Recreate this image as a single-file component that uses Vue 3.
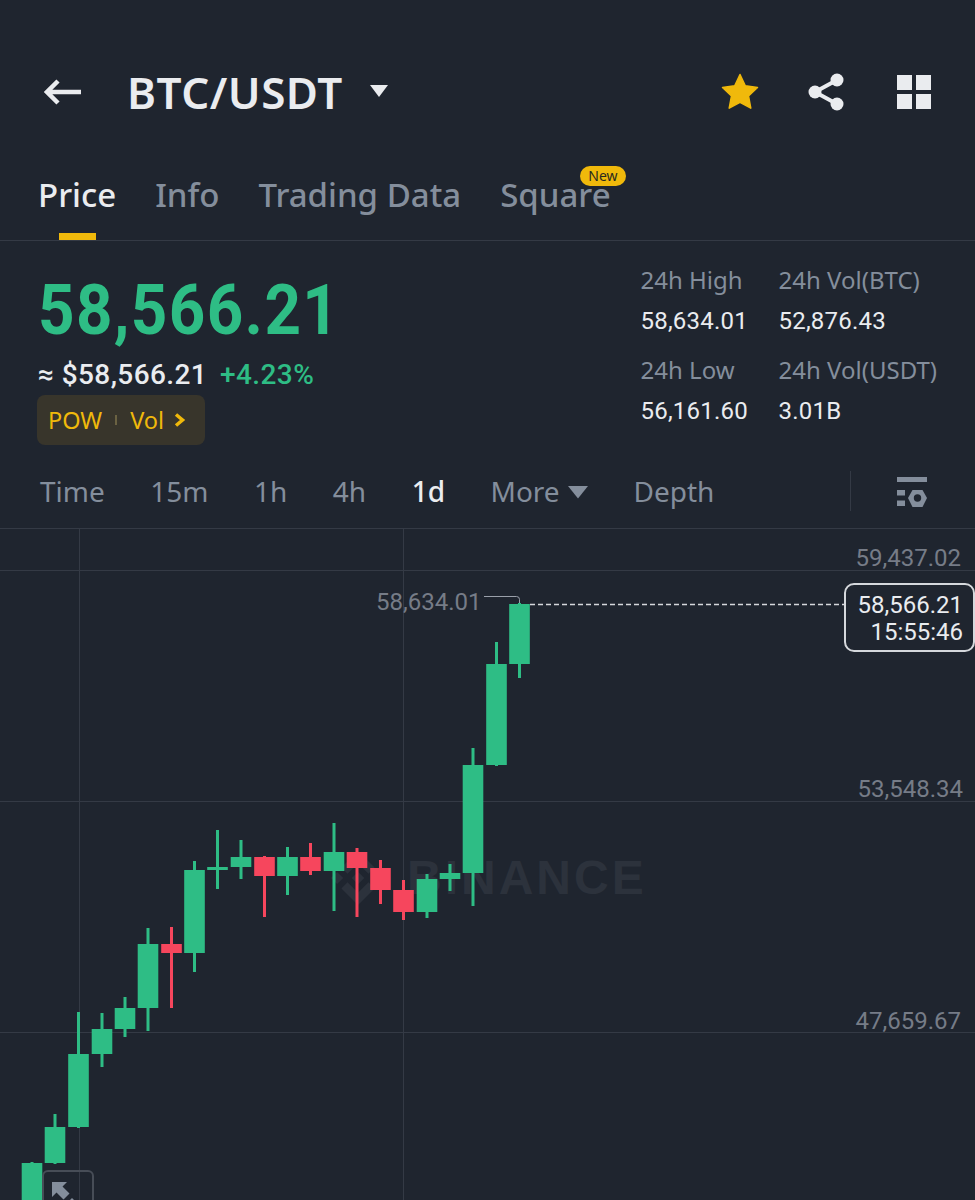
<script setup>
const up = '#2ebd85'
const down = '#f6465d'

// x centre, body top, body bottom, wick top, wick bottom, up or down
const candles = [
  [32, 1163, 1210, 1162, 1210, 1],
  [55, 1127, 1163, 1114, 1164, 1],
  [78.5, 1054, 1127, 1012, 1128, 1],
  [102, 1029, 1054, 1013, 1067, 1],
  [125, 1008, 1029, 997, 1037, 1],
  [148, 944, 1008, 928, 1031, 1],
  [171.5, 944, 953, 927, 1008, 0],
  [194.5, 870, 953, 861, 972, 1],
  [217.5, 867, 870, 830, 889, 1],
  [241, 857, 867, 840, 879, 1],
  [264.5, 857, 876, 856, 917, 0],
  [287.5, 857, 876, 847, 895, 1],
  [310.5, 857, 871, 843, 875, 0],
  [334, 852, 871, 823, 911, 1],
  [357, 852, 868, 848, 917, 0],
  [380.5, 868, 890, 860, 904, 0],
  [403.5, 890, 912, 880, 920, 0],
  [427, 879, 912, 874, 918, 1],
  [450, 873, 879, 864, 891, 1],
  [473, 765, 873, 748, 906, 1],
  [496.5, 664, 765, 642, 766, 1],
  [519.5, 604, 664, 603, 678, 1]
].map(([x, top, bottom, wickTop, wickBottom, isUp]) => ({
  x, top, bottom, wickTop, wickBottom, color: isUp ? up : down
}))

const chartTop = 529
const tabs = ['Time', '15m', '1h', '4h', '1d']
</script>

<template>
  <div class="page">
    <header class="topbar">
      <svg class="back" width="38" height="28" viewBox="0 0 38 28">
        <path d="M37 14H3M14 3 3 14l11 11" fill="none" stroke="#eaecef" stroke-width="4.500" />
      </svg>
      <span class="pair">BTC/USDT</span>
      <svg class="pair-caret" width="20" height="14" viewBox="0 0 20 14">
        <path d="M1 1h18l-9 12z" fill="#eaecef" />
      </svg>
      <div class="actions">
        <svg class="star" width="38" height="38" viewBox="0 0 38 38">
          <path d="M19 1.500l5.300 11.300 12.200 1.600-9 8.500 2.300 12.300L19 29.300 8.200 35.200l2.300-12.300-9-8.500 12.200-1.600z" fill="#f0b90b" stroke="#f0b90b" stroke-width="1.500" stroke-linejoin="round" />
        </svg>
        <svg width="36" height="38" viewBox="0 0 36 38">
          <circle cx="29" cy="7" r="6.500" fill="#eaecef" />
          <circle cx="7" cy="19" r="6.500" fill="#eaecef" />
          <circle cx="29" cy="31" r="6.500" fill="#eaecef" />
          <path d="M29 7 7 19l22 12" fill="none" stroke="#eaecef" stroke-width="4" />
        </svg>
        <div class="grid-icon"><i></i><i></i><i></i><i></i></div>
      </div>
    </header>

    <nav class="tabs">
      <a class="tab active">Price</a>
      <a class="tab">Info</a>
      <a class="tab">Trading Data</a>
      <a class="tab square">Square<span class="new">New</span></a>
    </nav>

    <section class="summary">
      <div class="price-col">
        <div class="price">58,566.21</div>
        <div class="fiat">≈ $58,566.21<span class="change">+4.23%</span></div>
        <div class="chips">
          <span>POW</span>
          <i class="chip-sep"></i>
          <span>Vol</span>
          <svg width="12" height="14" viewBox="0 0 12 14">
            <path d="M2 1.500l6.500 5.500L2 12.500" fill="none" stroke="#f0b90b" stroke-width="3.500" />
          </svg>
        </div>
      </div>
      <div class="stats">
        <div class="stat"><label>24h High</label><b>58,634.01</b></div>
        <div class="stat"><label>24h Vol(BTC)</label><b>52,876.43</b></div>
        <div class="stat"><label>24h Low</label><b>56,161.60</b></div>
        <div class="stat"><label>24h Vol(USDT)</label><b>3.01B</b></div>
      </div>
    </section>

    <div class="intervals">
      <span v-for="t in tabs" :key="t" class="interval" :class="{ current: t === '1d' }">{{ t }}</span>
      <span class="interval more">More
        <svg width="20" height="13" viewBox="0 0 20 13"><path d="M0 0h20L10 12.500z" fill="#848e9c" /></svg>
      </span>
      <span class="interval">Depth</span>
      <i class="intervals-sep"></i>
      <svg class="settings" width="31" height="30" viewBox="0 0 31 30">
        <path d="M0 0h30v5H0zM0 13h8v5.500H0zM0 23.500h8V29H0z" fill="#848e9c" />
        <path d="M15.500 13h10l4.500 8-4.500 9h-10L11 21z" fill="#848e9c" />
        <circle cx="20.500" cy="21" r="3.700" fill="#1f252f" />
      </svg>
    </div>

    <div class="chart">
      <div class="watermark">
        <svg width="54" height="54" viewBox="0 0 126.610 126.610">
          <path d="M38.730 53.200 63.300 28.630l24.590 24.590 14.300-14.300L63.300 0 24.430 38.900zM0 63.310l14.300-14.300 14.300 14.300-14.300 14.300zM38.730 73.410l24.570 24.570 24.590-24.580 14.310 14.290-38.900 38.910-38.880-38.880zM98 63.310l14.300-14.300 14.310 14.300-14.310 14.300zM77.830 63.300 63.300 48.760 52.550 59.510l-1.240 1.230-2.540 2.550 14.530 14.540 14.530-14.540z" fill="#2c323c" />
        </svg>
        <span>BINANCE</span>
      </div>

      <svg class="plot" width="975" height="671" :viewBox="`0 ${chartTop} 975 671`">
        <path d="M0 570.500H975M0 801.500H975M0 1032.500H975M79.500 529V1200M403.500 529V1200" stroke="#343a45" fill="none" />
        <path d="M484 596.500H516.500q3 0 3 3V604" stroke="#9aa0aa" fill="none" />
        <path d="M530 604.500H845" stroke="#d5d8dc" stroke-width="1.500" stroke-dasharray="5 3" fill="none" />
        <g v-for="c in candles" :key="c.x">
          <rect :x="c.x - 1.500" :y="c.wickTop" width="3" :height="c.wickBottom - c.wickTop" :fill="c.color" />
          <rect :x="c.x - 10.300" :y="c.top" width="20.600" :height="c.bottom - c.top" :fill="c.color" />
        </g>
      </svg>

      <span class="axis axis-top">59,437.02</span>
      <span class="axis axis-mid">53,548.34</span>
      <span class="axis axis-low">47,659.67</span>
      <span class="high">58,634.01</span>

      <div class="last-price">
        <span>58,566.21</span>
        <span>15:55:46</span>
      </div>

      <div class="expand">
        <svg width="34" height="30" viewBox="0 0 34 30">
          <path d="M0 0h15l-4.500 4.500 7 7-6 6-7-7L0 15zM20 16l6 6 4-4v12H18l4-4-6-6z" fill="#848e9c" />
        </svg>
      </div>
    </div>
  </div>
</template>

<style>
html, body {
  margin: 0;
  background: #1f252f;
}
</style>

<style scoped>
.page {
  width: 975px;
  height: 1200px;
  overflow: hidden;
  background: #1f252f;
  font-family: "Noto Sans", "Liberation Sans", sans-serif;
  color: #eaecef;
}
.topbar {
  display: flex;
  align-items: center;
  height: 38px;
  padding: 73px 44px 0 44px;
}
.pair {
  margin-left: 45px;
  font-size: 44px;
  font-weight: 600;
  line-height: 38px;
  letter-spacing: 0.5px;
}
.pair-caret {
  margin-left: 26px;
  margin-top: -2px;
}
.actions {
  display: flex;
  align-items: center;
  gap: 53px;
  margin-left: auto;
}
.star {
  margin-right: -4px;
}
.grid-icon {
  display: grid;
  grid-template-columns: 15px 15px;
  gap: 4px;
}
.grid-icon i {
  height: 15px;
  background: #eaecef;
}
.tabs {
  display: flex;
  gap: 39px;
  height: 90px;
  padding: 26px 0 0 38px;
  box-sizing: border-box;
  margin-top: 40px;
  border-bottom: 1px solid #343a45;
  font-size: 33px;
  font-weight: 500;
  color: #848e9c;
}
.tab {
  position: relative;
  height: 36px;
  line-height: 36px;
}
.tab.active {
  color: #eaecef;
}
.tab.active::after {
  content: "";
  position: absolute;
  left: 21px;
  bottom: -27px;
  width: 37px;
  height: 7px;
  background: #f0b90b;
}
.new {
  position: absolute;
  right: -15px;
  top: -11px;
  padding: 0 8px;
  height: 20px;
  line-height: 20px;
  border-radius: 10px;
  background: #f0b90b;
  color: #2a2a1f;
  font-size: 14px;
  font-weight: 400;
}
.summary {
  display: flex;
  justify-content: space-between;
  height: 213px;
  padding: 23px 38px 0 38px;
  box-sizing: border-box;
}
.price {
  margin-top: 4px;
  font-family: Roboto, sans-serif;
  font-size: 70px;
  font-weight: 700;
  line-height: 84px;
  letter-spacing: 1.5px;
  color: #2ebd85;
  transform: scaleX(0.91);
  transform-origin: left center;
}
.fiat {
  font-family: Roboto, sans-serif;
  font-size: 28px;
  font-weight: 500;
  line-height: 36px;
  letter-spacing: 0.4px;
  margin-top: 5px;
}
.change {
  margin-left: 13px;
  color: #2ebd85;
}
.chips {
  display: flex;
  align-items: center;
  gap: 10px;
  width: 168px;
  height: 50px;
  margin-top: 2px;
  margin-left: -1px;
  padding: 0 0 0 11px;
  box-sizing: border-box;
  border-radius: 8px;
  background: #38352b;
  color: #f0b90b;
  font-size: 23.500px;
}
.chip-sep {
  width: 2px;
  height: 10px;
  margin: 0 3px;
  background: #6b6242;
}
.stats {
  display: grid;
  grid-template-columns: 138px auto;
  row-gap: 19px;
  align-content: start;
}
.stat label {
  display: block;
  font-size: 24px;
  line-height: 32px;
  color: #848e9c;
}
.stat b {
  display: block;
  margin-top: 11px;
  font-family: Roboto, sans-serif;
  font-size: 24px;
  font-weight: 400;
  line-height: 28px;
  letter-spacing: 0.2px;
}
.intervals {
  display: flex;
  align-items: center;
  gap: 45.500px;
  height: 74px;
  padding: 0 47px 0 40px;
  border-bottom: 1px solid #343a45;
  font-size: 28px;
  color: #848e9c;
}
.interval.current {
  color: #eaecef;
  font-weight: 500;
}
.more svg {
  margin-left: 1px;
  vertical-align: 3px;
}
.intervals-sep {
  width: 1px;
  height: 40px;
  margin-left: auto;
  margin-right: 1px;
  background: #343a45;
}
.settings {
  margin-top: 2px;
}
.chart {
  position: relative;
  height: 671px;
  font-family: Roboto, sans-serif;
}
.plot {
  position: absolute;
  left: 0;
  top: 0;
}
.watermark {
  position: absolute;
  left: 331px;
  top: 321px;
  display: flex;
  align-items: center;
  gap: 22px;
  color: #2c323c;
  font-family: "Liberation Sans", sans-serif;
  font-size: 48px;
  font-weight: 700;
  letter-spacing: 3px;
}
.axis {
  position: absolute;
  right: 14px;
  font-size: 24px;
  line-height: 24px;
  color: #767c87;
}
.axis-top {
  top: 17px;
}
.axis-mid {
  top: 248px;
  right: 12px;
}
.axis-low {
  top: 480px;
}
.high {
  position: absolute;
  left: 376px;
  top: 61px;
  font-size: 24px;
  line-height: 24px;
  color: #767c87;
}
.last-price {
  position: absolute;
  left: 844px;
  top: 54px;
  display: flex;
  flex-direction: column;
  align-items: flex-end;
  width: 131px;
  height: 69px;
  padding: 7px 10px 0 0;
  box-sizing: border-box;
  border: 2px solid #d5d8dc;
  border-radius: 10px;
  background: #1f252f;
  font-size: 24px;
  line-height: 27px;
}
.expand {
  position: absolute;
  left: 42px;
  top: 641px;
  width: 52px;
  height: 60px;
  border: 2px solid #474d57;
  border-radius: 6px;
  padding: 10px 0 0 8px;
  box-sizing: border-box;
}
</style>
